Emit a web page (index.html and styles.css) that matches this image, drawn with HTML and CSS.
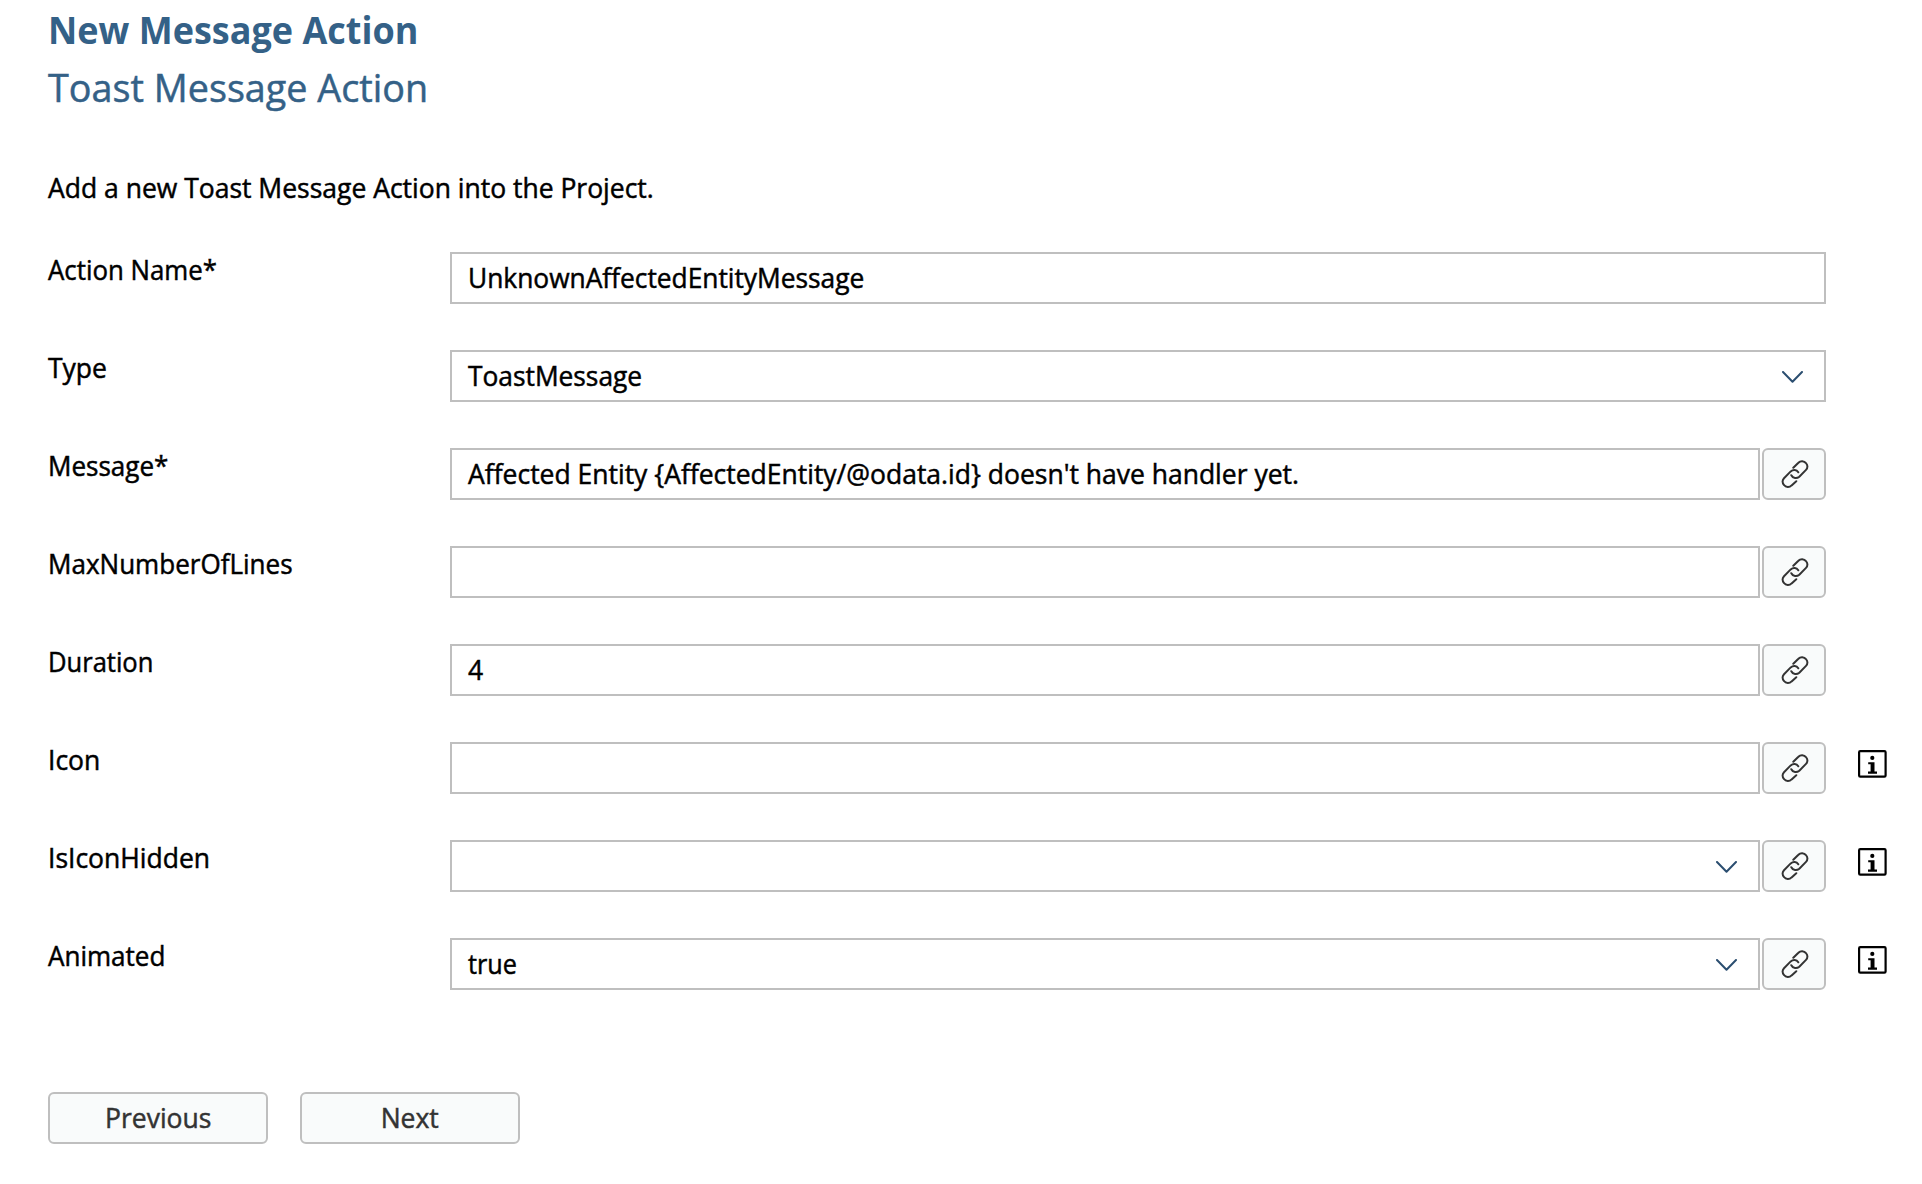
FILE: index.html
```html
<!DOCTYPE html>
<html lang="en">
<head>
<meta charset="utf-8">
<title>New Message Action</title>
<link rel="stylesheet" href="styles.css">
</head>
<body>
<svg class="defs" aria-hidden="true">
  <symbol id="link" viewBox="0 0 28 28"><path d="M12.300 7.700 17.400 2.700A5 5 0 0 1 25 3.100 4.800 4.800 0 0 1 25 9.900L18.300 16.700C15.800 18.900 12 18.600 10.300 15.200M15.300 21.200 10.600 25.400A5 5 0 0 1 3 25 4.800 4.800 0 0 1 3 18.200L9.700 11.400C12.200 9.200 15.500 9.500 17.300 12.300"/></symbol>
  <symbol id="chevron" viewBox="0 0 21 12"><path d="M1 1 10.500 10.700 20 1"/></symbol>
  <symbol id="info" viewBox="0 0 29 28"><rect x="1.100" y="1.100" width="26.500" height="25.600" rx="1.200"/><circle cx="14.300" cy="7.900" r="2.100"/><path d="M10.200 12.200h6.300v9.300h2.500v2.200h-9v-2.200h2.600v-7.200h-2.400z"/></symbol>
</svg>
<main class="wizard">
  <h1 class="title"><span class="text fit-97">New Message Action</span></h1>
  <h2 class="subtitle"><span class="text fit-97">Toast Message Action</span></h2>
  <p class="intro"><span class="text">Add a new Toast Message Action into the Project.</span></p>
  <form class="fields">
    <div class="row">
      <label class="label"><span class="text fit-92">Action Name*</span></label>
      <div class="control"><div class="input"><span class="text fit-94">UnknownAffectedEntityMessage</span></div></div>
    </div>
    <div class="row">
      <label class="label"><span class="text">Type</span></label>
      <div class="control"><div class="input"><span class="text fit-94">ToastMessage</span><svg class="chevron"><use href="#chevron"/></svg></div></div>
    </div>
    <div class="row">
      <label class="label"><span class="text fit-93">Message*</span></label>
      <div class="control"><div class="input"><span class="text">Affected Entity {AffectedEntity/@odata.id} doesn't have handler yet.</span></div><button type="button" class="bind"><svg class="link"><use href="#link"/></svg></button></div>
    </div>
    <div class="row">
      <label class="label"><span class="text fit-93">MaxNumberOfLines</span></label>
      <div class="control"><div class="input"></div><button type="button" class="bind"><svg class="link"><use href="#link"/></svg></button></div>
    </div>
    <div class="row">
      <label class="label"><span class="text fit-91">Duration</span></label>
      <div class="control"><div class="input"><span class="text">4</span></div><button type="button" class="bind"><svg class="link"><use href="#link"/></svg></button></div>
    </div>
    <div class="row">
      <label class="label"><span class="text">Icon</span></label>
      <div class="control"><div class="input"></div><button type="button" class="bind"><svg class="link"><use href="#link"/></svg></button></div>
      <svg class="info"><use href="#info"/></svg>
    </div>
    <div class="row">
      <label class="label"><span class="text">IsIconHidden</span></label>
      <div class="control"><div class="input"><svg class="chevron"><use href="#chevron"/></svg></div><button type="button" class="bind"><svg class="link"><use href="#link"/></svg></button></div>
      <svg class="info"><use href="#info"/></svg>
    </div>
    <div class="row">
      <label class="label"><span class="text fit-93">Animated</span></label>
      <div class="control"><div class="input"><span class="text fit-90">true</span><svg class="chevron"><use href="#chevron"/></svg></div><button type="button" class="bind"><svg class="link"><use href="#link"/></svg></button></div>
      <svg class="info"><use href="#info"/></svg>
    </div>
  </form>
  <div class="actions">
    <button type="button" class="button"><span class="text">Previous</span></button>
    <button type="button" class="button"><span class="text">Next</span></button>
  </div>
</main>
</body>
</html>
```

FILE: styles.css
```css
* { box-sizing: border-box; }
body {
  margin: 0;
  background: #fff;
  color: #000;
  font: 28px/34px "Open Sans", "Noto Sans", sans-serif;
}
h1, h2, p { margin: 0; }
.defs { display: none; }
.wizard { padding: 0 0 0 48px; }

/* Slightly condensed lettering */
.text {
  display: inline-block;
  white-space: pre;
  transform: scaleX(.946);
  transform-origin: left;
  -webkit-text-stroke: .5px currentColor;
}
.fit-90 { transform: scaleX(.9); }
.fit-91 { transform: scaleX(.912); }
.fit-92 { transform: scaleX(.922); }
.fit-93 { transform: scaleX(.93); }
.fit-94 { transform: scaleX(.94); }
.fit-97 { transform: scaleX(.968); }

.title, .subtitle { color: #346187; }
.title { font-size: 37px; line-height: 60px; font-weight: 700; }
.title .text { transform: scaleX(.973); -webkit-text-stroke: 0; }
.subtitle { font-size: 39px; line-height: 54px; font-weight: 400; }
.intro { margin-top: 56px; }

.fields {
  display: grid;
  gap: 46px;
  margin-top: 48px;
}
.row { display: flex; height: 52px; }
.label { width: 402px; }
.control { display: flex; gap: 2px; width: 1376px; }
.input {
  flex: 1;
  display: flex;
  padding: 0 21px 0 16px;
  border: 2px solid #bfbfbf;
  background: #fff;
  line-height: 46px;
}
.chevron {
  width: 21px;
  height: 12px;
  margin: 19px 0 0 auto;
  fill: none;
  stroke: #2b4e70;
  stroke-width: 2;
  stroke-linecap: round;
  stroke-linejoin: round;
}
.bind, .button {
  padding: 0;
  border: 2px solid #bfbfbf;
  border-radius: 6px;
  background: #f9fbfb;
  color: #333;
  font: inherit;
}
.bind {
  display: flex;
  align-items: center;
  justify-content: center;
  width: 64px;
}
.link {
  width: 28px;
  height: 28px;
  margin-left: 1px;
  fill: none;
  stroke: #333;
  stroke-width: 2;
  stroke-linecap: round;
}
.info { width: 29px; height: 28px; margin: 8px 0 0 32px; }
#info rect { fill: none; stroke: #000; stroke-width: 2.2; }

.actions { display: flex; gap: 32px; margin-top: 102px; }
.button {
  display: flex;
  justify-content: center;
  width: 220px;
  height: 52px;
  line-height: 46px;
}
.button .text { transform-origin: center; }
```
